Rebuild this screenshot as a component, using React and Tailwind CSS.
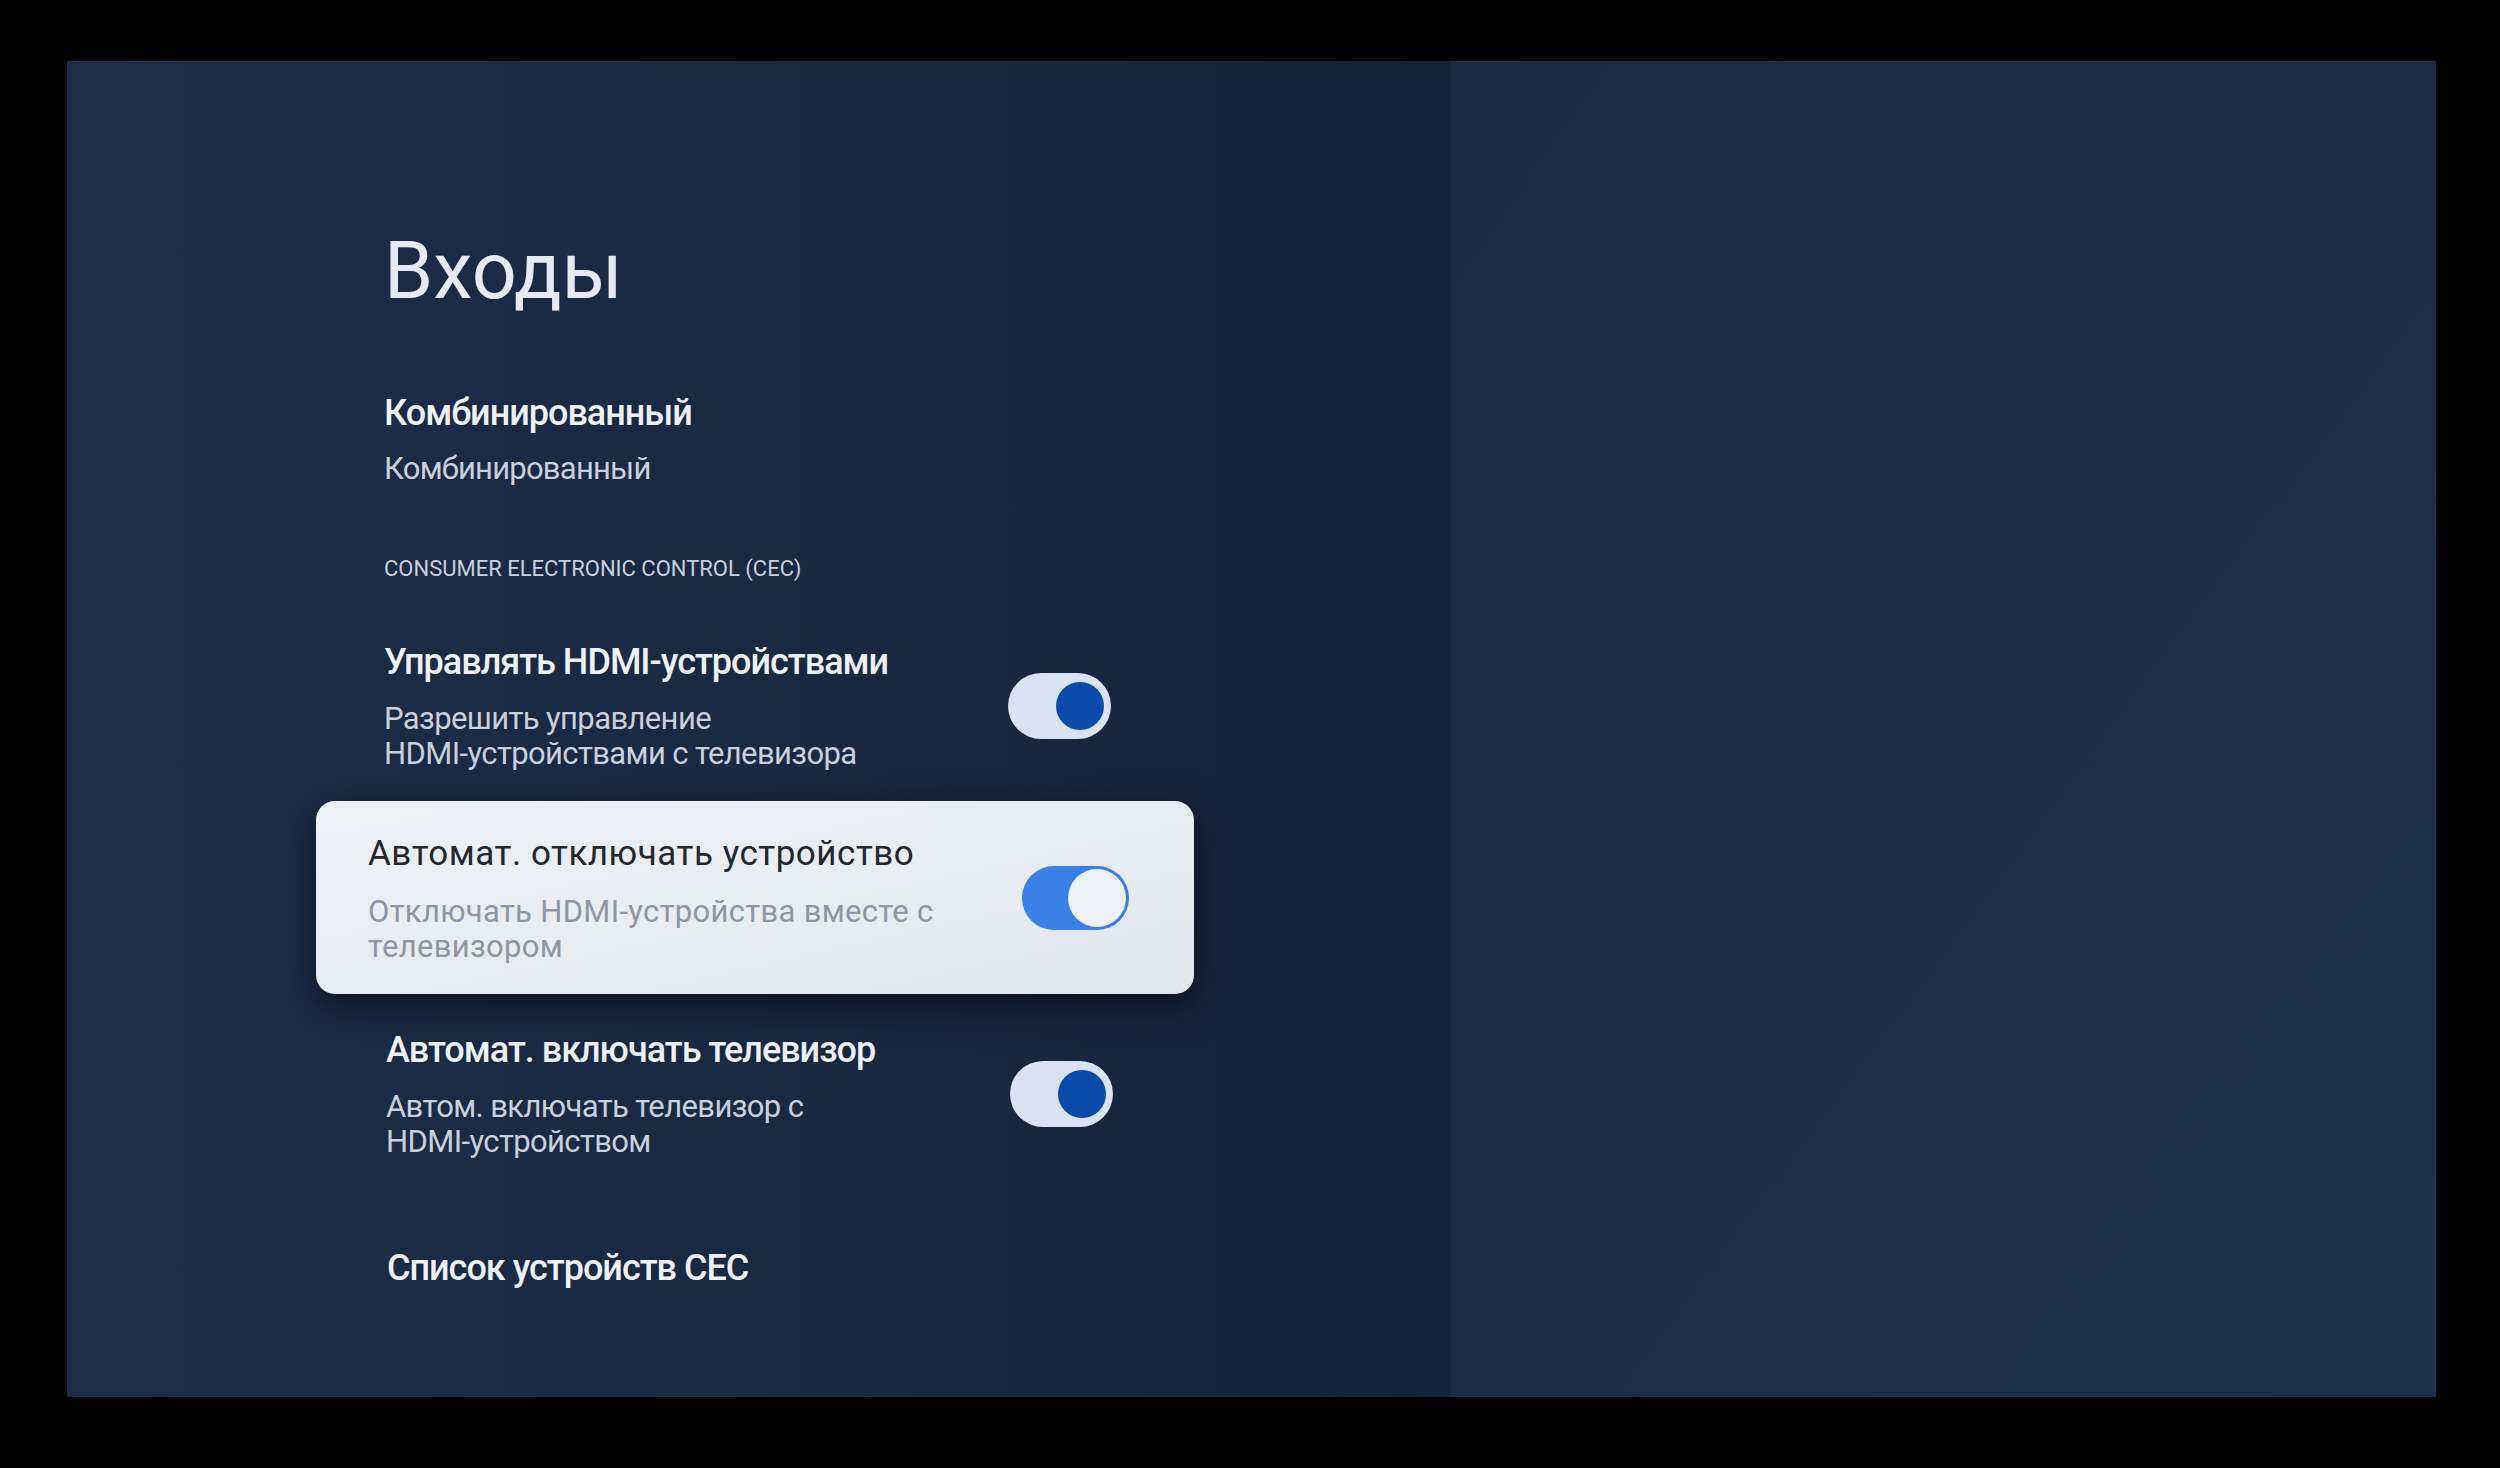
import React from 'react';

const font = { fontFamily: 'Roboto, "Noto Sans", sans-serif' };

const Toggle = ({ focused }) =>
  focused ? (
    <div className="w-[107px] h-[64px] rounded-full bg-[#3b7fe9] flex items-center justify-end pr-[3px] shrink-0">
      <div className="w-[58px] h-[58px] rounded-full bg-[#eef2f8]"></div>
    </div>
  ) : (
    <div className="w-[103px] h-[66px] rounded-full bg-[#d9e3f4] flex items-center justify-end pr-[7px] shrink-0">
      <div className="w-[48px] h-[48px] rounded-full bg-[#0b4bab]"></div>
    </div>
  );

const SwitchRow = ({ title, lines, className = '' }) => (
  <div className={`w-[727px] flex items-center justify-between ${className}`}>
    <div className="flex flex-col">
      <div className="text-[36px] leading-[44px] font-medium tracking-[-0.028em] text-[#eef1f6]">{title}</div>
      <div className="mt-[17px] text-[31px] leading-[35px] tracking-[-0.02em] text-[#c9d0dc]">
        {lines.map((l) => (
          <div key={l}>{l}</div>
        ))}
      </div>
    </div>
    <Toggle />
  </div>
);

export default function App() {
  return (
    <div className="w-[2500px] h-[1468px] bg-black pt-[61px] pl-[67px]" style={font}>
      <div className="w-[2369px] h-[1336px] flex overflow-hidden">
        {/* settings panel */}
        <div className="w-[1384px] h-full bg-gradient-to-r from-[#1c2c48] via-[#1a2942] to-[#15233a] pl-[317px] pt-[170px]">
          <h1 className="text-[79px] leading-[80px] text-[#e6eaf2]">Входы</h1>

          <div className="mt-[80px] text-[36px] leading-[44px] font-medium tracking-[-0.028em] text-[#eef1f6]">Комбинированный</div>
          <div className="mt-[14px] text-[31px] leading-[40px] tracking-[-0.025em] text-[#c9d0dc]">Комбинированный</div>

          <div className="mt-[66px] text-[22px] leading-[28px] text-[#c8cfdb]">CONSUMER ELECTRONIC CONTROL (CEC)</div>

          <SwitchRow
            className="mt-[57px]"
            title="Управлять HDMI-устройствами"
            lines={['Разрешить управление', 'HDMI-устройствами с телевизора']}
          />

          {/* focused item */}
          <div className="mt-[30px] -ml-[68px] w-[878px] h-[193px] rounded-[19px] bg-gradient-to-br from-[#eef1f6] via-[#e8ecf3] to-[#e2e7ef] shadow-[0_12px_36px_rgba(0,0,0,0.55)] pl-[52px] pr-[65px] flex items-center justify-between">
            <div className="flex flex-col">
              <div className="text-[35px] leading-[44px] tracking-[0.015em] text-[#23272e]">Автомат. отключать устройство</div>
              <div className="mt-[18px] text-[31px] leading-[35px] tracking-[0.01em] text-[#8f96a4]">
                <div>Отключать HDMI-устройства вместе с</div>
                <div>телевизором</div>
              </div>
            </div>
            <Toggle focused />
          </div>

          <SwitchRow
            className="mt-[34px] ml-[2px]"
            title="Автомат. включать телевизор"
            lines={['Автом. включать телевизор с', 'HDMI-устройством']}
          />

          <div className="mt-[87px] ml-[3px] text-[36px] leading-[44px] font-medium tracking-[-0.028em] text-[#eef1f6]">Список устройств CEC</div>
        </div>

        {/* right area */}
        <div className="flex-1 h-full bg-gradient-to-br from-[#1a2a44] via-[#1b2b46] to-[#1e2f4b]"></div>
      </div>
    </div>
  );
}
